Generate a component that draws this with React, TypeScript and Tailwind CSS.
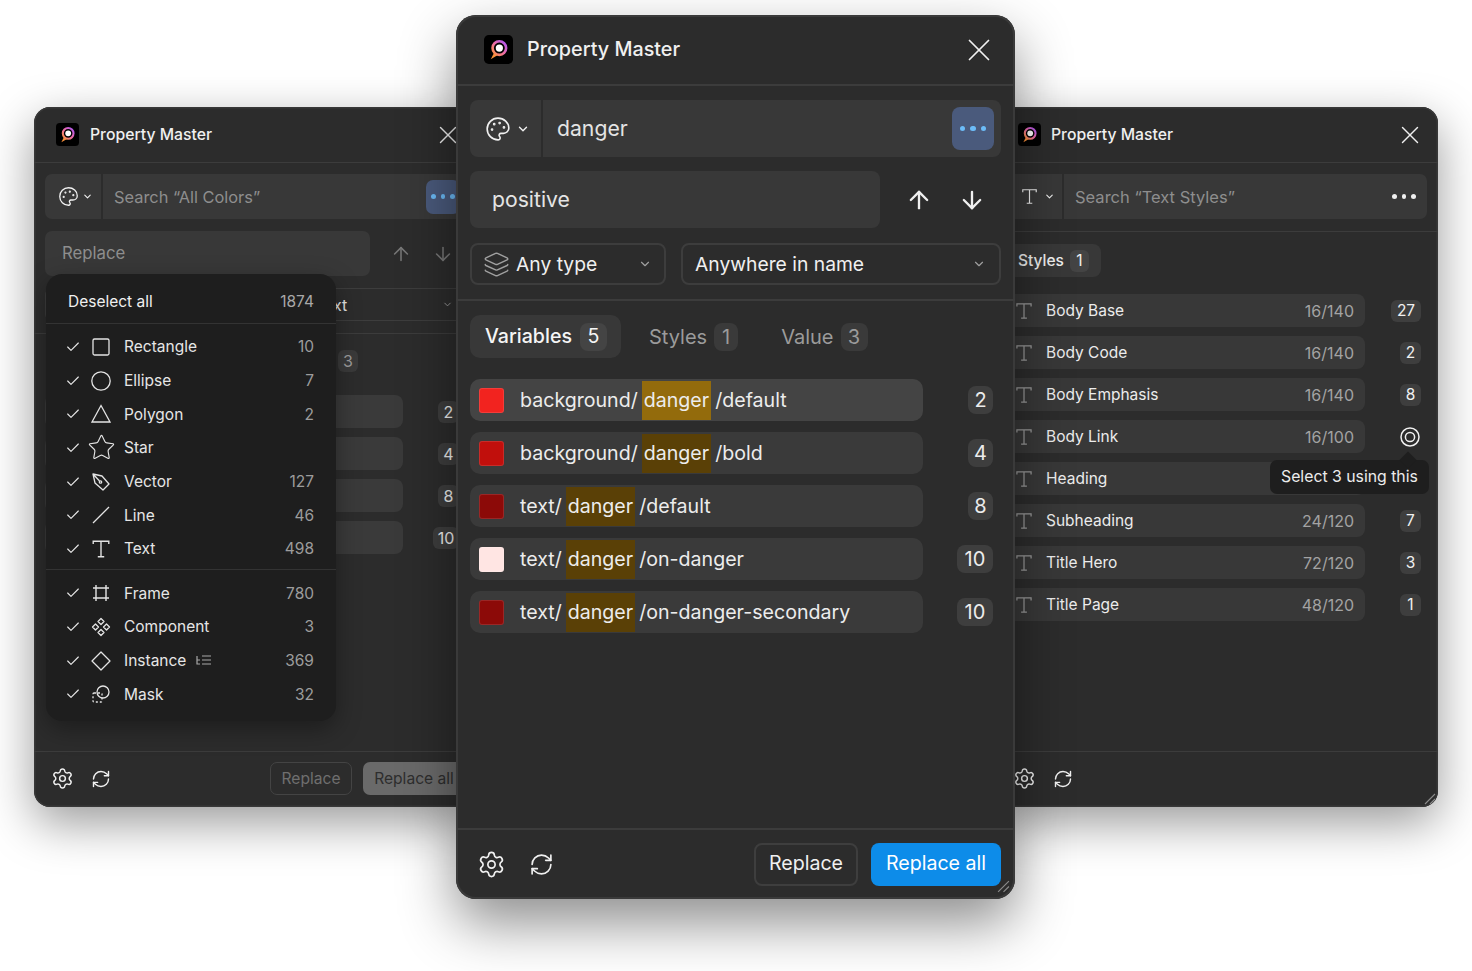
import React from "react";
import { ArrowDown, ArrowUp, Check, ChevronDown, Palette, RefreshCw, Settings, X, Layers, Star } from "lucide-react";

function Logo({ className }: { className: string }) {
  const id = React.useId();
  return (
    <svg viewBox="0 0 24 24" className={className}>
      <defs>
        <linearGradient id={id} x1="1" y1="0" x2="0" y2="1">
          <stop offset="0" stopColor="#a855f7" />
          <stop offset="0.5" stopColor="#ec6aa8" />
          <stop offset="1" stopColor="#fb923c" />
        </linearGradient>
      </defs>
      <rect width="24" height="24" rx="4" fill="#000" />
      <path d="M8.6 14.2 L5.6 20 L11.4 16.6 Z" fill="#fb923c" />
      <circle cx="12.7" cy="10.8" r="5.6" fill="#000" stroke={`url(#${id})`} strokeWidth="2.2" />
      <circle cx="12.7" cy="10.8" r="3" fill="#fff" />
    </svg>
  );
}

function TIcon({ className }: { className: string }) {
  return (
    <svg viewBox="0 0 24 24" fill="none" stroke="currentColor" strokeWidth="1.5" className={className}>
      <path d="M3.5 6.5V3.5h17v3M12 3.5v17M8.5 20.5h7" />
    </svg>
  );
}

function Dots({ className, dot }: { className: string; dot: string }) {
  return (
    <div className={className}>
      <span className={dot} />
      <span className={dot} />
      <span className={dot} />
    </div>
  );
}

function Grip({ className }: { className: string }) {
  return (
    <svg viewBox="0 0 12 12" fill="none" stroke="#8a8a8a" strokeWidth="1.1" className={className}>
      <path d="M1 11 11 1M6 11l5-5" />
    </svg>
  );
}

const swatches = ["#f2231f", "#c10f0c", "#8c0a08", "#ffe5e3", "#8c0a08"];
const varRows: [string, string, string, string][] = [
  ["background/", "/default", "2", swatches[0]],
  ["background/", "/bold", "4", swatches[1]],
  ["text/", "/default", "8", swatches[2]],
  ["text/", "/on-danger", "10", swatches[3]],
  ["text/", "/on-danger-secondary", "10", swatches[4]],
];

function CenterWindow() {
  return (
    <section className="absolute left-[456px] top-[15px] z-20 flex h-[884px] w-[559px] flex-col rounded-[20px] bg-[#2c2c2c] text-[#f0f0f0] shadow-[inset_0_0_0_2px_#3a3a3a,0_24px_56px_rgba(0,0,0,0.45)]">
      <header className="flex h-[71px] shrink-0 items-center border-b-2 border-[#3c3c3c] pl-[28px] pr-[17px]">
        <Logo className="h-[29px] w-[29px]" />
        <span className="ml-[14px] pt-[1px] text-[19.75px] font-medium">Property Master</span>
        <X className="ml-auto h-[38px] w-[38px]" strokeWidth={1.1} />
      </header>
      <div className="flex flex-col gap-[14px] px-[14px] pt-[14px]">
        <div className="flex h-[57px] items-center rounded-[8px] bg-[#383838]">
          <div className="flex h-full w-[73px] items-center gap-[5px] border-r-2 border-[#2c2c2c] pl-[15px]">
            <Palette className="h-[26px] w-[26px]" strokeWidth={1.5} />
            <ChevronDown className="h-[14px] w-[14px]" strokeWidth={2.4} />
          </div>
          <span className="ml-[14px] text-[21.2px] text-[#e4e4e4]">danger</span>
          <Dots className="ml-auto mr-[7px] flex h-[43px] w-[42px] items-center justify-center gap-[5px] rounded-[8px] bg-[#4a5a7c]" dot="h-[5.5px] w-[5.5px] rounded-full bg-[#6cbcf8]" />
        </div>
        <div className="flex h-[57px] items-center">
          <div className="flex h-full w-[410px] items-center rounded-[8px] bg-[#383838] pl-[22px] pt-[1px] text-[21.2px] text-[#e4e4e4]">positive</div>
          <ArrowUp className="ml-[25px] h-[28px] w-[28px]" strokeWidth={2} />
          <ArrowDown className="ml-[25px] h-[28px] w-[28px]" strokeWidth={2} />
        </div>
        <div className="mt-[1px] flex h-[42px] gap-[15px]">
          <div className="flex w-[196px] items-center rounded-[8px] border-2 border-[#3d3d3d] pl-[11px] pr-[12px] text-[19.3px]">
            <Layers className="h-[27px] w-[27px] text-[#a0a0a0]" strokeWidth={1.3} />
            <span className="ml-[6px]">Any type</span>
            <ChevronDown className="ml-auto h-[14px] w-[14px] text-[#a0a0a0]" strokeWidth={2} />
          </div>
          <div className="flex flex-1 items-center rounded-[8px] border-2 border-[#3d3d3d] pl-[12px] pr-[13px] text-[19.3px]">
            <span>Anywhere in name</span>
            <ChevronDown className="ml-auto h-[14px] w-[14px] text-[#a0a0a0]" strokeWidth={2} />
          </div>
        </div>
      </div>
      <div className="mt-[14px] flex items-center border-t-2 border-[#3c3c3c] px-[14px] pt-[14px] text-[20px] font-medium">
        <div className="flex h-[43px] w-[151px] items-center rounded-[10px] bg-[#383838] pl-[15px] text-[19.6px] text-[#f5f5f5]">
          Variables
          <span className="ml-[8px] flex h-[28px] w-[27px] items-center justify-center rounded-[8px] bg-[#444444] font-normal">5</span>
        </div>
        <div className="ml-[28px] flex items-center font-normal text-[#9b9b9b]">
          Styles
          <span className="ml-[7px] flex h-[28px] w-[24px] items-center justify-center rounded-[8px] bg-[#3a3a3a]">1</span>
        </div>
        <div className="ml-[43px] flex items-center font-normal text-[#9b9b9b]">
          Value
          <span className="ml-[7px] flex h-[28px] w-[27px] items-center justify-center rounded-[8px] bg-[#3a3a3a]">3</span>
        </div>
      </div>
      <div className="mt-[21px] flex flex-col gap-[11px] px-[14px]">
        {varRows.map(([a, b, n, c], i) => (
          <div key={i} className="flex h-[42px] items-center text-[19.6px] text-[#ececec]">
            <div className={`flex h-full w-[453px] items-center rounded-[10px] pl-[9px] ${i === 0 ? "bg-[#444444]" : "bg-[#3a3a3a]"}`}>
              <span className="h-[25px] w-[25px] rounded-[3px] border border-[#ffffff1f]" style={{ backgroundColor: c }} />
              <span className="ml-[16px] pt-[1px]">{a}</span>
              <span className={`mx-[4px] flex h-[39px] items-center px-[2px] pt-[1px] ${i === 0 ? "bg-[#936b0c]" : "bg-[#5a4006]"}`}>danger</span>
              <span className="pt-[1px]">{b}</span>
            </div>
            <span className={`ml-auto mr-[8px] flex h-[28px] items-center justify-center rounded-[8px] bg-[#3e3e3e] text-[20px] ${n === "10" ? "w-[36px]" : "w-[25px]"}`}>{n}</span>
          </div>
        ))}
      </div>
      <footer className="mt-auto flex h-[71px] shrink-0 items-center border-t-2 border-[#3c3c3c] pb-[1px] pl-[20.5px] pr-[14px]">
        <Settings className="h-[29px] w-[29px]" strokeWidth={1.4} />
        <RefreshCw className="ml-[23px] h-[25px] w-[25px]" strokeWidth={1.6} />
        <div className="ml-auto flex h-[43px] w-[104px] items-center justify-center rounded-[8px] border-2 border-[#3e3e3e] text-[19.6px]">Replace</div>
        <div className="ml-[13px] flex h-[43px] w-[130px] items-center justify-center rounded-[8px] bg-[#0d8ce9] text-[19.6px] text-white">Replace all</div>
      </footer>
      <Grip className="absolute bottom-[6px] right-[5px] h-[13px] w-[13px]" />
    </section>
  );
}

function SmallHeader({ titleGap }: { titleGap: string }) {
  return (
    <header className="flex h-[56px] shrink-0 items-center border-b-[1.5px] border-[#3c3c3c] pl-[22px] pr-[13px]">
      <Logo className="h-[23px] w-[23px]" />
      <span className={`${titleGap} pt-[1px] text-[15.75px] font-medium text-[#f0f0f0]`}>Property Master</span>
      <X className="ml-auto h-[30px] w-[30px]" strokeWidth={1.15} />
    </header>
  );
}

function SmallFooter({ dim }: { dim?: boolean }) {
  return (
    <footer className="mt-auto flex h-[56px] shrink-0 items-center border-t-[1.5px] border-[#3c3c3c] pb-[2px] pl-[16.5px]">
      <Settings className="h-[23px] w-[23px]" strokeWidth={1.5} />
      <RefreshCw className="ml-[17.5px] h-[20px] w-[20px]" strokeWidth={1.7} />
      {dim && (
        <>
          <div className="ml-[159px] flex h-[33px] w-[82px] items-center justify-center rounded-[7px] border-[1.5px] border-[#444444] text-[15.6px] text-[#6f6f6f]">Replace</div>
          <div className="ml-[11px] flex h-[33px] w-[102px] items-center justify-center rounded-[7px] bg-[#6a6a6a] text-[15.6px] text-[#2e2e2e]">Replace all</div>
        </>
      )}
    </footer>
  );
}

function MenuRow({ icon, label, count, extra }: { icon: React.ReactNode; label: string; count?: string; extra?: React.ReactNode }) {
  return (
    <div className="flex h-[33.7px] items-center pl-[19px] pr-[22px]">
      <Check className="h-[16px] w-[16px] text-[#e8e8e8]" strokeWidth={1.7} />
      <span className="ml-[9px] flex h-[22px] w-[22px] items-center justify-center text-[#e4e4e4]">{icon}</span>
      <span className="ml-[12px] text-[15.5px] text-[#e6e6e6]">{label}</span>
      {extra}
      {count && <span className="ml-auto text-[15.5px] text-[#9c9c9c]">{count}</span>}
    </div>
  );
}

const ic = "h-[20px] w-[20px]";

function Menu() {
  return (
    <div className="absolute left-[12px] top-[167px] z-10 flex h-[447px] w-[290px] flex-col rounded-[16px] bg-[#1e1e1e] shadow-[0_8px_24px_rgba(0,0,0,0.35)]">
      <div className="flex h-[49.5px] shrink-0 items-center justify-between border-b-[1.5px] border-[#333333] pl-[22px] pr-[22px] pt-[7px] text-[15.5px]">
        <span className="text-[#f0f0f0]">Deselect all</span>
        <span className="text-[#a8a8a8]">1874</span>
      </div>
      <div className="flex flex-col border-b-[1.5px] border-[#333333] pb-[3.5px] pt-[6.5px]">
        <MenuRow label="Rectangle" count="10" icon={<svg viewBox="0 0 20 20" fill="none" stroke="currentColor" strokeWidth="1.3" className={ic}><rect x="2" y="2" width="16" height="16" rx="1.5" /></svg>} />
        <MenuRow label="Ellipse" count="7" icon={<svg viewBox="0 0 20 20" fill="none" stroke="currentColor" strokeWidth="1.3" className={ic}><circle cx="10" cy="10" r="9.2" /></svg>} />
        <MenuRow label="Polygon" count="2" icon={<svg viewBox="0 0 20 20" fill="none" stroke="currentColor" strokeWidth="1.3" className={ic}><path d="M10 1.5 19 18H1Z" /></svg>} />
        <MenuRow label="Star" icon={<Star className="h-[29px] w-[29px] shrink-0" strokeWidth={0.95} />} />
        <MenuRow label="Vector" count="127" icon={<svg viewBox="0 0 20 20" fill="none" stroke="currentColor" strokeWidth="1.3" className={ic} strokeLinejoin="round"><path d="M2 2 4 11 12 18 18 12 11 4ZM2 2l6.5 7" /><circle cx="9.5" cy="10" r="1.2" /></svg>} />
        <MenuRow label="Line" count="46" icon={<svg viewBox="0 0 20 20" fill="none" stroke="currentColor" strokeWidth="1.3" className={ic}><path d="M2 18 18 2" /></svg>} />
        <MenuRow label="Text" count="498" icon={<TIcon className="h-[22px] w-[22px]" />} />
      </div>
      <div className="flex flex-col pt-[6px]">
        <MenuRow label="Frame" count="780" icon={<svg viewBox="0 0 20 20" fill="none" stroke="currentColor" strokeWidth="1.4" className={ic}><path d="M5 2v16M15 2v16M2 5h16M2 15h16" /></svg>} />
        <MenuRow label="Component" count="3" icon={<svg viewBox="0 0 20 20" fill="none" stroke="currentColor" strokeWidth="1.3" className={ic} strokeLinejoin="round"><path d="M10 1.5 13 4.5 10 7.5 7 4.5ZM10 12.5 13 15.5 10 18.5 7 15.5ZM4.5 7 7.5 10 4.5 13 1.5 10ZM15.5 7 18.5 10 15.5 13 12.5 10Z" /></svg>} />
        <MenuRow label="Instance" count="369" extra={<svg viewBox="0 0 16 12" fill="none" stroke="#a8a8a8" strokeWidth="1.2" className="ml-[10px] h-[12px] w-[16px]"><path d="M1 1v8h3M1 5h3M6 1h9M6 5h9M6 9h9" /></svg>} icon={<svg viewBox="0 0 20 20" fill="none" stroke="currentColor" strokeWidth="1.3" className={ic} strokeLinejoin="round"><path d="M10 1 19 10 10 19 1 10Z" /></svg>} />
        <MenuRow label="Mask" count="32" icon={<svg viewBox="0 0 20 20" fill="none" stroke="currentColor" strokeWidth="1.3" className={ic}><circle cx="12" cy="8" r="6" /><rect x="2" y="9" width="9" height="9" rx="1" strokeDasharray="2 2" /></svg>} />
      </div>
    </div>
  );
}

function LeftWindow() {
  return (
    <section className="absolute left-[34px] top-[107px] z-10 flex h-[700px] w-[442px] flex-col overflow-hidden rounded-[16px] bg-[#2c2c2c] text-[#f0f0f0] shadow-[inset_0_0_0_1.5px_#383838,0_16px_48px_rgba(0,0,0,0.4)]">
      <SmallHeader titleGap="ml-[11px]" />
      <div className="flex flex-col gap-[12px] px-[11px] pt-[11px]">
        <div className="flex h-[45px] items-center rounded-[7px] bg-[#383838]">
          <div className="flex h-full w-[58px] items-center gap-[3px] border-r-2 border-[#2c2c2c] pl-[12.5px]">
            <Palette className="h-[21px] w-[21px]" strokeWidth={1.5} />
            <ChevronDown className="h-[11px] w-[11px]" strokeWidth={2.4} />
          </div>
          <span className="ml-[11px] pt-[1px] text-[16.4px] text-[#8e8e8e]">Search “All Colors”</span>
          <Dots className="ml-auto mr-[5px] flex h-[34px] w-[34px] items-center justify-center gap-[5px] rounded-[7px] bg-[#4a5a7c]" dot="h-[4.5px] w-[4.5px] rounded-full bg-[#6cbcf8]" />
        </div>
        <div className="flex h-[45px] items-center">
          <div className="flex h-full w-[325px] items-center rounded-[7px] bg-[#383838] pl-[17px] pt-[1px] text-[16.75px] text-[#8e8e8e]">Replace</div>
          <ArrowUp className="ml-[20px] h-[22px] w-[22px] text-[#777777]" strokeWidth={1.7} />
          <ArrowDown className="ml-[20px] h-[22px] w-[22px] text-[#777777]" strokeWidth={1.7} />
        </div>
        <div className="flex h-[33px] gap-[12px]">
          <div className="w-[246px] rounded-[7px] border-[1.5px] border-[#3d3d3d]" />
          <div className="flex flex-1 items-center rounded-[7px] border-[1.5px] border-[#3d3d3d] pl-[11px] pr-[11px] text-[16px] text-[#e4e4e4]">
            <span>Text</span>
            <ChevronDown className="ml-auto h-[11px] w-[11px] text-[#a0a0a0]" strokeWidth={2} />
          </div>
        </div>
      </div>
      <div className="mt-[12px] flex h-[44px] items-center border-t-[1.5px] border-[#3c3c3c] px-[11px] pt-[11px] text-[16px]">
        <div className="ml-[293px] flex h-[22px] w-[20px] items-center justify-center rounded-[6px] bg-[#3a3a3a] text-[#9b9b9b]">3</div>
      </div>
      <div className="mt-[18px] flex flex-col gap-[9px] pl-[11px] pr-[17px]">
        {["2", "4", "8", "10"].map((n) => (
          <div key={n} className="flex h-[33px] items-center text-[16px]">
            <div className="h-full w-[358px] rounded-[8px] bg-[#3a3a3a]" />
            <span className={`ml-auto flex h-[22px] items-center justify-center rounded-[6px] bg-[#3e3e3e] ${n === "10" ? "w-[26px]" : "w-[21px]"}`}>{n}</span>
          </div>
        ))}
      </div>
      <SmallFooter dim />
      <Menu />
    </section>
  );
}

const textRows: [string, string, string][] = [
  ["Body Base", "16/140", "27"],
  ["Body Code", "16/140", "2"],
  ["Body Emphasis", "16/140", "8"],
  ["Body Link", "16/100", "target"],
  ["Heading", "", ""],
  ["Subheading", "24/120", "7"],
  ["Title Hero", "72/120", "3"],
  ["Title Page", "48/120", "1"],
];

function RightWindow() {
  return (
    <section className="absolute left-[996px] top-[107px] z-10 flex h-[700px] w-[442px] flex-col overflow-hidden rounded-[16px] bg-[#2c2c2c] text-[#f0f0f0] shadow-[inset_0_0_0_1.5px_#383838,0_16px_48px_rgba(0,0,0,0.4)]">
      <SmallHeader titleGap="ml-[10px]" />
      <div className="px-[11px] pt-[11px]">
        <div className="flex h-[45px] items-center rounded-[7px] bg-[#383838]">
          <div className="flex h-full w-[57px] items-center gap-[5px] border-r-2 border-[#2c2c2c] pl-[13px]">
            <TIcon className="h-[19px] w-[19px]" />
            <ChevronDown className="h-[11px] w-[11px]" strokeWidth={2.4} />
          </div>
          <span className="ml-[11px] pt-[1px] text-[16.5px] text-[#8e8e8e]">Search “Text Styles”</span>
          <Dots className="ml-auto mr-[6px] flex h-[34px] w-[34px] items-center justify-center gap-[5px] rounded-[7px]" dot="h-[4.5px] w-[4.5px] rounded-full bg-[#f0f0f0]" />
        </div>
      </div>
      <div className="mt-[12px] border-t-[1.5px] border-[#3c3c3c] px-[11px] pt-[12px]">
        <div className="flex h-[33px] w-[94px] items-center rounded-[8px] bg-[#383838] pl-[11px] text-[15.5px] font-medium">
          Styles
          <span className="ml-[6px] flex h-[22px] w-[19px] items-center justify-center rounded-[6px] bg-[#444444] font-normal">1</span>
        </div>
      </div>
      <div className="mt-[17px] flex flex-col gap-[9px] pl-[11px] pr-[17px]">
        {textRows.map(([name, v, n]) => (
          <div key={name} className="flex h-[33px] items-center text-[15.5px]">
            <div className="flex h-full w-[358px] items-center rounded-[8px] bg-[#383838] pl-[7px] pr-[11px]">
              <TIcon className="h-[20px] w-[20px] text-[#9a9a9a]" />
              <span className="ml-[12px] text-[#ececec]">{name}</span>
              <span className="ml-auto text-[16px] text-[#a3a3a3]">{v}</span>
            </div>
            {n === "target" ? (
              <svg viewBox="0 0 20 20" fill="none" stroke="#f0f0f0" strokeWidth="1.5" className="ml-auto mr-[1px] h-[20px] w-[20px]">
                <circle cx="10" cy="10" r="9" />
                <circle cx="10" cy="10" r="4.6" />
              </svg>
            ) : n ? (
              <span className={`ml-auto flex h-[22px] items-center justify-center rounded-[6px] bg-[#3e3e3e] ${n === "27" ? "w-[30px]" : "w-[21px]"}`}>{n}</span>
            ) : null}
          </div>
        ))}
      </div>
      <SmallFooter />
      <div className="absolute left-[274px] top-[353px] z-10 flex h-[34px] w-[159px] items-center rounded-[7px] bg-[#1e1e1e] pl-[11px] text-[15.8px] text-[#ececec]">
        Select 3 using this
        <span className="absolute left-[132px] top-[-6px] h-[12px] w-[12px] rotate-45 bg-[#1e1e1e]" />
      </div>
      <Grip className="absolute bottom-[2px] right-[2px] h-[12px] w-[12px]" />
    </section>
  );
}

export default function App() {
  return (
    <div className="relative h-[971px] w-[1472px] overflow-hidden bg-white [font-family:Inter,sans-serif]">
      <LeftWindow />
      <RightWindow />
      <CenterWindow />
    </div>
  );
}
